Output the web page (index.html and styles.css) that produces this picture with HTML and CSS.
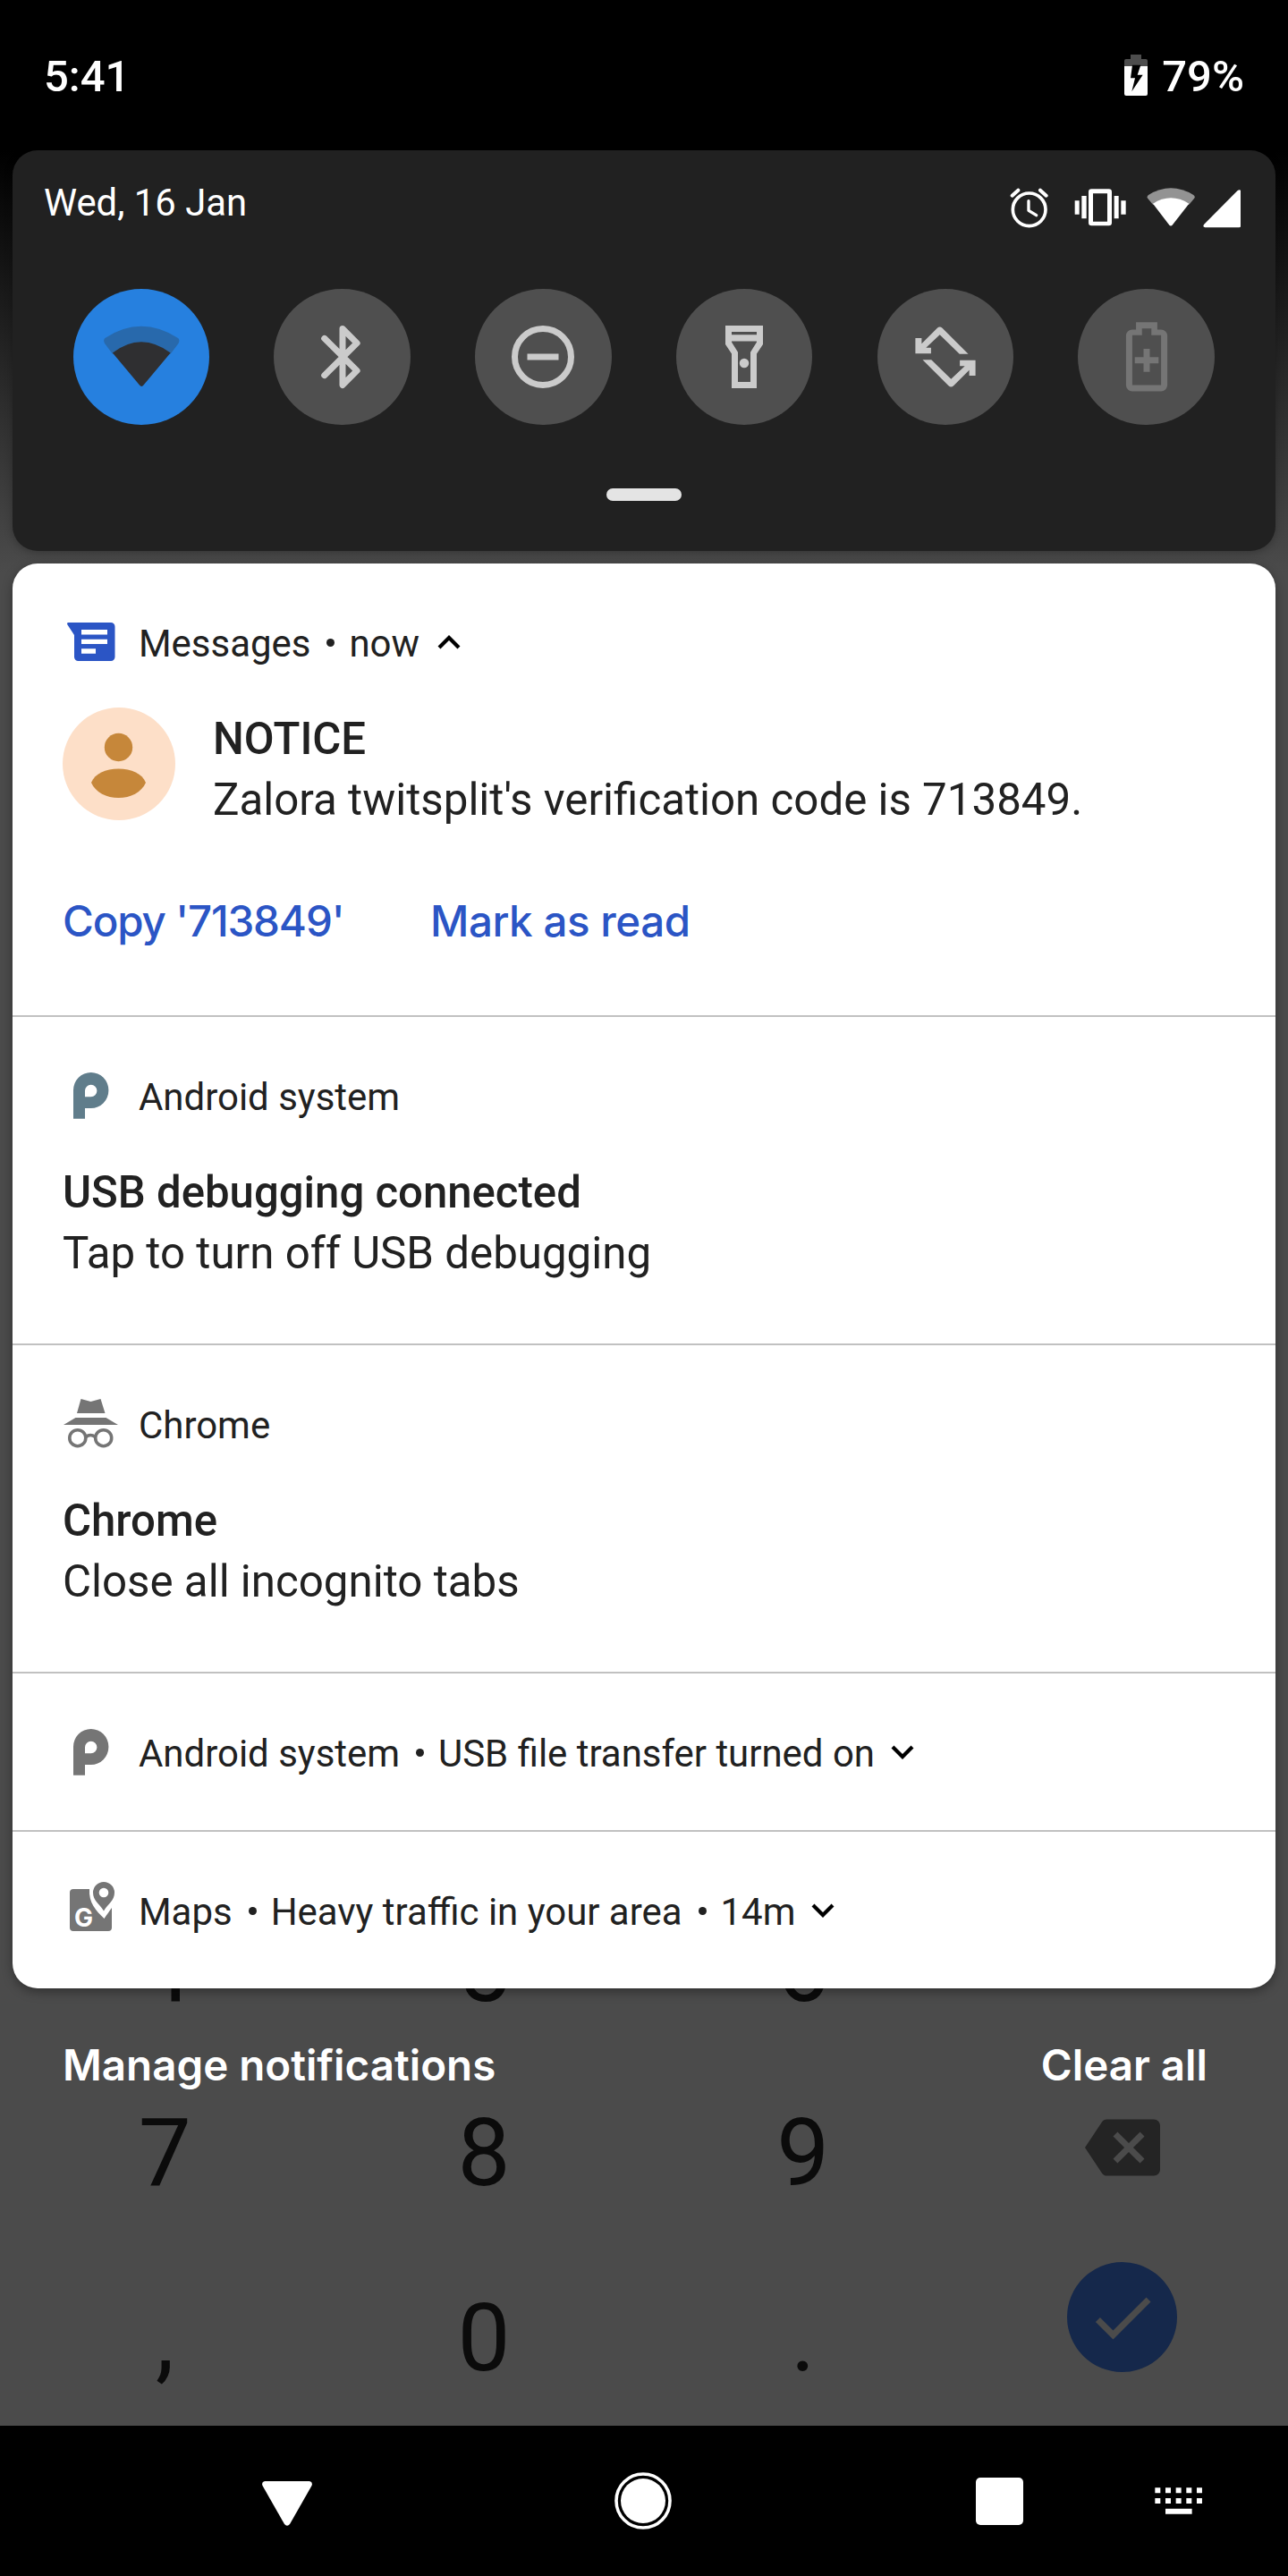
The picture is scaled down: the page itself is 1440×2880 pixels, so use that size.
FILE: index.html
```html
<!DOCTYPE html>
<html lang="en">
<head>
<meta charset="utf-8">
<title>Notifications</title>
<link rel="stylesheet" href="styles.css">
</head>
<body>
<div class="screen">
  <div class="keypad">
    <span class="key">4</span><span class="key">5</span><span class="key">6</span><span class="key"></span>
    <span class="key">7</span><span class="key">8</span><span class="key">9</span>
    <span class="key"><svg class="backspace" viewBox="0 0 24 24"><path d="M22 3H7c-.69 0-1.23.35-1.59.88L0 12l5.41 8.11c.36.53.9.89 1.59.89h15c1.1 0 2-.9 2-2V5c0-1.1-.9-2-2-2zm-3 12.59L17.59 17 14 13.41 10.41 17 9 15.59 12.59 12 9 8.41 10.41 7 14 10.59 17.59 7 19 8.41 15.41 12 19 15.59z"/></svg></span>
    <span class="key">,</span><span class="key">0</span><span class="key">.</span>
    <span class="key"><span class="enter"><svg viewBox="0 0 24 24"><path d="M9 16.17L4.83 12l-1.42 1.41L9 19 21 7l-1.41-1.41z"/></svg></span></span>
  </div>

  <header class="status-bar">
    <span class="clock">5:41</span>
    <span class="battery">
      <svg class="battery-icon" viewBox="531 93 78 138">
        <path fill="#4d4d4d" d="M552 93h36v15h15q6 0 6 6v20h-78v-20q0-6 6-6h15z"/>
        <path fill="#fff" d="M531 132h78v93q0 6-6 6h-66q-6 0-6-6z"/>
        <path fill="#000" d="M558 128h28l-11 33h18l-37 56 11-45h-15z"/>
      </svg>
      <span>79%</span>
    </span>
  </header>

  <section class="quick-settings">
    <div class="qs-head">
      <span class="date">Wed, 16 Jan</span>
      <span class="qs-icons">
        <svg class="ic-alarm" viewBox="148 536 130 140" fill="none" stroke="#fff" stroke-width="11" stroke-linecap="round" stroke-linejoin="round"><circle cx="213" cy="612" r="55"/><path d="M211 583v32l26 16" stroke-width="10"/><path d="M156 565l20-18M270 565l-20-18" stroke-width="12"/></svg>
        <svg class="ic-vibrate" viewBox="364 536 175 140" fill="#fff"><path fill-rule="evenodd" d="M422 543h58q10 0 10 10v103q0 10-10 10h-58q-10 0-10-10V553q0-10 10-10zM427 558v94h48v-94z"/><path d="M366 582h15v46h-15zM389 566h16v76h-16zM498 566h15v76h-15zM521 582h16v46h-16z"/></svg>
        <svg class="ic-wifi" viewBox="607 536 162 140"><path fill="#939393" d="M611 575q-5-7 2-12 75-46 151 0 7 5 2 12l-17 20-121 0z"/><path fill="#fff" d="M628 592q60-38 121 0l-55 71q-6 7-12 0z"/></svg>
        <svg class="ic-signal" viewBox="794 536 128 140"><path fill="#fff" d="M797 662L910 548q11-6 11 5v113q0 6-6 6H801q-9-2-4-10z"/></svg>
      </span>
    </div>
    <div class="tiles">
      <span class="tile active"><svg class="wifi-tile" viewBox="0 0 153 153"><path fill="#2869ac" d="M35 61q-2-4 1-6 40-26 81 0 3 2 1 6L109 73H44z"/><path fill="#2f2f31" d="M44 71.8q32-24.600 65 0L79 107.500q-2.500 3.500-5 0z"/></svg></span>
      <span class="tile"><svg viewBox="0 0 24 24" fill="none" stroke="#cbcbcb" stroke-width="2" stroke-linecap="round" stroke-linejoin="round"><path d="M6.200 6.100L16.600 16.400 12 21V3l4.600 4.600L6.200 17.900"/></svg></span>
      <span class="tile"><svg viewBox="0 0 24 24"><circle cx="12" cy="12" r="9" fill="none" stroke="#cbcbcb" stroke-width="2"/><path d="M7 11h10v2H7z"/></svg></span>
      <span class="tile"><svg viewBox="0 0 24 24"><path fill-rule="evenodd" d="M6 2h12v6l-2 3v11H8V11L6 8zM8 4v.9h8V4zM8 7v.3l2 3.200V20h4v-9.500l2-3.200V7z"/><circle cx="12" cy="14" r="1.500"/></svg></span>
      <span class="tile"><svg viewBox="0 0 24 24"><path d="M9.400 2.800q.8-.7 1.600 0L19.300 11.100H16.500L10.200 4.900 5.800 9.100H7.400V10.900H2.400V6H4.400V7.800z"/><path transform="rotate(180 12 12)" d="M9.400 2.800q.8-.7 1.600 0L19.300 11.100H16.500L10.200 4.900 5.800 9.100H7.400V10.900H2.400V6H4.400V7.800z"/></svg></span>
      <span class="tile disabled"><svg viewBox="0 0 24 24"><path fill-rule="evenodd" d="M8.600.9h6.800v2.400h1.200a2 2 0 0 1 2 2V21a2 2 0 0 1-2 2H7.400a2 2 0 0 1-2-2V5.300a2 2 0 0 1 2-2h1.200zM10.500 2.900v2.200H7.400V21h9.200V5.100h-3.100V2.900z"/><path d="M11 9.400h2v2.700h2.800v2H13v2.700h-2v-2.700H8.200v-2H11z"/></svg></span>
    </div>
    <div class="handle"></div>
  </section>

  <main class="shade">
    <article class="note messages">
      <div class="note-head">
        <svg class="app-icon" viewBox="0 0 63 63"><path fill="#2b55c5" d="M6.500 10H54a4.500 4.500 0 0 1 4.500 4.500V48.500A4.500 4.500 0 0 1 54 53H17.500A4.500 4.500 0 0 1 13 48.500V24L5.300 12.200Q4.500 10 6.500 10z"/><path fill="#fff" d="M21 18h29v5.500H21zM21 28.700h29V34H21zM21 39.300h16v5.400H21z"/></svg>
        <span>Messages</span><i class="dot"></i><span>now</span>
        <svg class="chevron up" viewBox="0 0 26 16"><path d="M2 2l11 11L24 2"/></svg>
      </div>
      <div class="note-body">
        <svg class="avatar" viewBox="0 0 126 126"><circle cx="63" cy="63" r="63" fill="#fddfc8"/><circle cx="62.500" cy="44.500" r="15.700" fill="#c6873a"/><path fill="#c6873a" d="M32 84C36 74 48 68.500 62.500 68.500S89 74 93 84C88 95 76 101 62.500 101S37 95 32 84z"/></svg>
        <div class="note-text">
          <h2>NOTICE</h2>
          <p>Zalora twitsplit's verification code is 713849.</p>
        </div>
      </div>
      <div class="actions"><span class="act-copy">Copy '713849'</span><span class="act-read">Mark as read</span></div>
    </article>

    <article class="note">
      <div class="note-head">
        <svg class="app-icon" viewBox="0 0 63 63"><path fill="#607d8b" fill-rule="evenodd" d="M12 57.700V26a19.700 20 0 1 1 19.700 20H25v11.700zM25 33.300h6.700a6.700 6.800 0 1 0-6.700-6.800z"/></svg>
        <span>Android system</span>
      </div>
      <div class="note-body"><div class="note-text"><h2>USB debugging connected</h2><p>Tap to turn off USB debugging</p></div></div>
    </article>

    <article class="note">
      <div class="note-head">
        <svg class="app-icon" viewBox="0 0 63 63"><path fill="#757575" d="M20.500 4l11 3 11-3 5 16h-31.500zM14.500 25h34L62 33H1z"/><g fill="none" stroke="#757575" stroke-width="3.600"><circle cx="16.800" cy="47.700" r="9"/><circle cx="45.700" cy="47.700" r="9"/><path d="M26 46.500q5-4 10.500 0"/></g></svg>
        <span>Chrome</span>
      </div>
      <div class="note-body"><div class="note-text"><h2>Chrome</h2><p>Close all incognito tabs</p></div></div>
    </article>

    <article class="note compact">
      <div class="note-head">
        <svg class="app-icon" viewBox="0 0 63 63"><path fill="#757575" fill-rule="evenodd" d="M12 57.700V26a19.700 20 0 1 1 19.700 20H25v11.700zM25 33.300h6.700a6.700 6.800 0 1 0-6.700-6.800z"/></svg>
        <span>Android system</span><i class="dot"></i><span>USB file transfer turned on</span>
        <svg class="chevron" viewBox="0 0 26 16"><path d="M2 2l11 11L24 2"/></svg>
      </div>
    </article>

    <article class="note compact">
      <div class="note-head">
        <svg class="app-icon" viewBox="0 0 63 63"><path fill="#757575" d="M12 8H30C29 23 37 32 46.500 41 50 36 52 33 55 29V51a4 4 0 0 1-4 4H12a4 4 0 0 1-4-4V12a4 4 0 0 1 4-4z"/><path fill="#757575" fill-rule="evenodd" d="M46 0a12 12 0 0 1 12 12C58 21 51 24 46 32.500 41 24 34 21 34 12A12 12 0 0 1 46 0zM46 6.700a5.300 5.300 0 1 0 0 10.600 5.300 5.300 0 0 0 0-10.600z"/><text class="maps-letter" x="23.500" y="49.500" text-anchor="middle">G</text></svg>
        <span>Maps</span><i class="dot"></i><span>Heavy traffic in your area</span><i class="dot"></i><span>14m</span>
        <svg class="chevron" viewBox="0 0 26 16"><path d="M2 2l11 11L24 2"/></svg>
      </div>
    </article>
  </main>

  <div class="shade-footer"><span class="manage">Manage notifications</span><span class="clear">Clear all</span></div>

  <nav class="nav-bar">
    <svg class="nav-back" viewBox="0 0 56 50"><path d="M3 0h50q4 1 2.500 5L31 48q-3 3.500-6 0L.5 5Q-1 1 3 0z"/></svg>
    <svg class="nav-home" viewBox="0 0 64 64"><circle cx="32" cy="32" r="30" fill="none" stroke="#fff" stroke-width="3.600"/><circle cx="32" cy="32" r="25"/></svg>
    <span class="nav-recents"></span>
    <svg class="nav-keyboard" viewBox="994 1263 160 90"><path d="M995 1264h18v18h-18zM1030 1264h18v18h-18zM1065 1264h18v18h-18zM1100 1264h18v18h-18zM1135 1264h18v18h-18zM995 1299h18v18h-18zM1030 1299h18v18h-18zM1065 1299h18v18h-18zM1100 1299h18v18h-18zM1135 1299h18v18h-18zM1030 1334h89v18h-89z"/></svg>
  </nav>
</div>
</body>
</html>
```
FILE: styles.css
```css
* { box-sizing: border-box; }
body { margin: 0; background: #000; }
svg { display: block; flex: none; }

.screen {
  position: relative;
  display: flex;
  flex-direction: column;
  width: 1440px;
  height: 2880px;
  overflow: hidden;
  background: linear-gradient(#000 168px, #4b4b4b 640px);
  font-family: Roboto, "Liberation Sans", sans-serif;
  color: #212121;
}

/* dimmed keyboard, its top row partly covered by the shade */
.keypad {
  position: absolute;
  left: 6px;
  right: 7px;
  bottom: 162px;
  display: grid;
  grid-template-columns: repeat(4, 1fr);
  grid-auto-rows: 206.5px;
}
.key {
  display: flex;
  align-items: center;
  justify-content: center;
  font-size: 105px;
  line-height: 206px;
  color: #0b0b0b;
}
.backspace { width: 84px; height: 84px; fill: #242424; margin-bottom: 14px; }
.enter {
  display: flex;
  align-items: center;
  justify-content: center;
  width: 123px;
  height: 123px;
  margin-bottom: 48px;
  border-radius: 50%;
  background: #15284b;
}
.enter svg { width: 84px; height: 84px; fill: #4b4b4b; }

.status-bar, .quick-settings, .shade, .shade-footer, .nav-bar { position: relative; flex: none; }

.status-bar {
  display: flex;
  justify-content: space-between;
  height: 168px;
  padding: 57px 49px 0 49px;
  font-size: 49px;
  font-weight: 500;
  line-height: 58px;
  color: #fff;
}
.battery { display: flex; gap: 16px; }
.battery-icon { width: 26px; height: 46px; margin-top: 4px; }

.quick-settings {
  height: 448px;
  margin: 0 14px 14px;
  border-radius: 28px;
  background: #212121;
  box-shadow: 0 2px 10px rgba(0, 0, 0, .25);
}
.qs-head {
  display: flex;
  justify-content: space-between;
  height: 154.500px;
  padding: 34px 38.700px 0 35px;
}
.date { font-size: 41.800px; line-height: 50px; color: #fff; }
.qs-icons { display: flex; padding-top: 6.700px; }
.qs-icons svg { height: 46.670px; }
.ic-alarm { width: 43.330px; margin-right: 28.670px; }
.ic-vibrate { width: 58.330px; margin-right: 22.670px; }
.ic-wifi { width: 54px; margin-right: 8.330px; }
.ic-signal { width: 42.670px; }

.tiles { display: flex; justify-content: space-between; padding: 0 68px 0 67.500px; }
.tile {
  display: flex;
  align-items: center;
  justify-content: center;
  width: 152.500px;
  height: 152.500px;
  border-radius: 50%;
  background: #4f4f4f;
}
.tile svg { width: 84px; height: 84px; fill: #cbcbcb; }
.tile svg[fill="none"] { fill: none; }
.tile .wifi-tile { width: 152.500px; height: 152.500px; }
.tile.active { background: #2680df; }
.tile.disabled svg { fill: #757575; }
.handle { width: 84px; height: 14px; margin: 71px auto 0; border-radius: 7px; background: #e4e4e4; }

.shade {
  height: 1593px;
  margin: 0 14px;
  border-radius: 28px;
  background: #fff;
  box-shadow: 0 4px 12px rgba(0, 0, 0, .35);
}
.note { height: 367px; padding: 56px 56px 0; border-bottom: 2px solid #c1c1c1; }
.note.messages { height: 507px; }
.note.compact { height: 177px; }
.note:last-child { height: 175px; border-bottom: 0; }
.note-head {
  display: flex;
  align-items: center;
  height: 63px;
  font-size: 41.950px;
  line-height: 50px;
}
.note-head span { padding-top: 4px; white-space: nowrap; }
.app-icon { width: 63px; height: 63px; margin-right: 22px; }
.dot { width: 9px; height: 9px; margin: 2px 16px 0 18px; border-radius: 50%; background: #212121; }
.chevron { width: 26px; height: 16px; margin: 1px 0 0 18px; fill: none; stroke: #000; stroke-width: 4.200; }
.chevron.up { margin-left: 20px; transform: rotate(180deg); }
.maps-letter { font: 700 28px Inter, sans-serif; fill: #fff; }

.note-body { display: flex; gap: 42px; margin-top: 42px; }
.avatar { width: 126px; height: 126px; }
.note-text { height: 126px; padding-top: 1px; }
.note h2, .note p { margin: 0; line-height: 68px; white-space: nowrap; }
.note h2 { font-size: 49.100px; font-weight: 500; }
.note p { font-size: 49.250px; font-weight: 400; }

.actions, .shade-footer {
  display: flex;
  font-family: Inter, Lato, sans-serif;
  font-size: 47.500px;
  font-weight: 500;
  line-height: 60px;
  white-space: nowrap;
}
.actions { margin-top: 83px; color: #2b55c5; }
.act-copy { width: 411px; letter-spacing: -1.150px; }
.act-read { letter-spacing: -.450px; }

.shade-footer { justify-content: space-between; height: 489px; padding: 56px 90px 0 70px; font-weight: 600; color: #fff; }

.nav-bar {
  display: flex;
  align-items: center;
  height: 168px;
  background: #000;
  fill: #fff;
}
.nav-back { width: 56px; height: 50px; margin: 5px 338px 0 293px; }
.nav-home { width: 64px; height: 64px; margin-right: 340px; }
.nav-recents { width: 53px; height: 53px; margin-right: 147px; border-radius: 5px; background: #fff; }
.nav-keyboard { width: 53.300px; height: 30px; }
```
